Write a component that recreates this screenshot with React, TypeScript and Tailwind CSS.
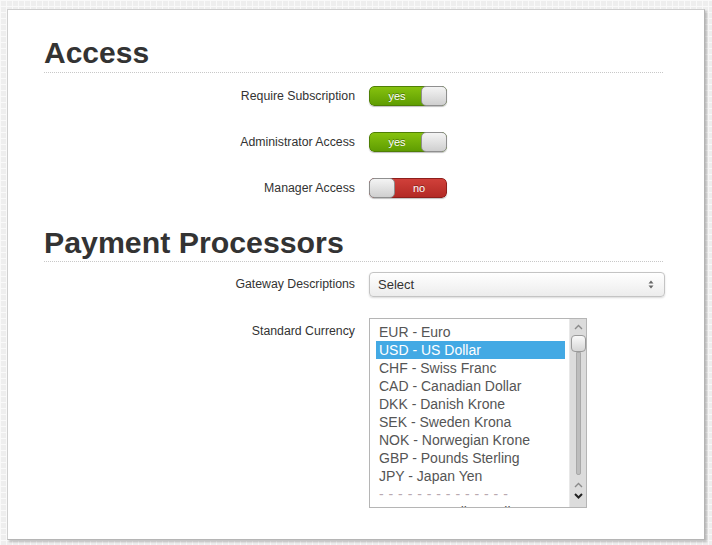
import React from "react";

const currencies = [
  "EUR - Euro",
  "USD - US Dollar",
  "CHF - Swiss Franc",
  "CAD - Canadian Dollar",
  "DKK - Danish Krone",
  "SEK - Sweden Krona",
  "NOK - Norwegian Krone",
  "GBP - Pounds Sterling",
  "JPY - Japan Yen",
  "- - - - - - - - - - - - - -",
  "AUD - Australian Dollar",
];

function Toggle({ on }: { on: boolean }) {
  return (
    <div className="relative h-[20px] w-[78px] rounded-[5px] overflow-hidden shadow-[0_1px_1px_rgba(0,0,0,0.25)]">
      {on ? (
        <>
          <div className="absolute inset-0 rounded-[5px] border border-[#4f7f05] bg-[linear-gradient(#86c20e,#5f9d02)] flex items-center">
            <span className="w-[54px] text-center text-[11px] text-white [text-shadow:0_-1px_0_rgba(0,0,0,0.35)]">yes</span>
          </div>
          <div className="absolute right-0 top-0 h-[20px] w-[26px] rounded-[5px] border border-[#8f8f8f] bg-[linear-gradient(#f4f4f4,#cfcfcf)]" />
        </>
      ) : (
        <>
          <div className="absolute inset-0 rounded-[5px] border border-[#8e1f1c] bg-[linear-gradient(#d0403a,#b32a25)] flex items-center justify-end">
            <span className="w-[54px] text-center text-[11px] text-white [text-shadow:0_-1px_0_rgba(0,0,0,0.35)]">no</span>
          </div>
          <div className="absolute left-0 top-0 h-[20px] w-[26px] rounded-[5px] border border-[#8f8f8f] bg-[linear-gradient(#f4f4f4,#cfcfcf)]" />
        </>
      )}
    </div>
  );
}

function Row({ label, children, top }: { label: string; children: React.ReactNode; top?: boolean }) {
  return (
    <div className={`flex ${top ? "items-start" : "items-center"}`}>
      <div className={`w-[311px] shrink-0 text-right text-[12.3px] text-[#333] ${top ? "pt-[4px]" : ""}`}>{label}</div>
      <div className="ml-[14px] shrink-0">{children}</div>
    </div>
  );
}

function Chevron({ dir, bold }: { dir: "up" | "down"; bold?: boolean }) {
  return (
    <svg width="9" height="6" viewBox="0 0 9 6">
      <path
        d={dir === "up" ? "M1 5 L4.5 1.5 L8 5" : "M1 1 L4.5 4.5 L8 1"}
        fill="none"
        stroke={bold ? "#222" : "#8a8a8a"}
        strokeWidth={bold ? 2 : 1.4}
      />
    </svg>
  );
}

export default function App() {
  return (
    <div
      className="w-[712px] h-[545px] overflow-hidden bg-[#eeeeee] bg-[linear-gradient(#f9f9f9_1px,transparent_1px),linear-gradient(90deg,#f9f9f9_1px,transparent_1px)] [background-size:6px_6px] pt-[9px] pl-[7px]"
      style={{ fontFamily: '"Liberation Sans", Arial, sans-serif' }}
    >
      <div className="w-[698px] h-[531px] bg-white border border-[#cfcfcf] border-r-[#b5b5b5] border-b-[#b5b5b5] shadow-[2px_2px_2px_rgba(0,0,0,0.22)] pl-[36px] pr-[41px] pt-[25px]">
        <h1 className="h-[38px] border-b border-dotted border-[#c8c8c8] text-[30px] leading-[36px] font-bold text-[#333]">
          Access
        </h1>
        <div className="mt-[13px] flex flex-col gap-[26px]">
          <Row label="Require Subscription">
            <Toggle on />
          </Row>
          <Row label="Administrator Access">
            <Toggle on />
          </Row>
          <Row label="Manager Access">
            <Toggle on={false} />
          </Row>
        </div>
        <h1 className="mt-[26px] h-[38px] border-b border-dotted border-[#c8c8c8] text-[30.3px] leading-[38px] font-bold text-[#333]">
          Payment Processors
        </h1>
        <div className="mt-[10px]">
          <Row label="Gateway Descriptions">
            <div className="flex h-[25px] w-[296px] items-center justify-between rounded-[4px] border border-[#c4c4c4] bg-[linear-gradient(#ffffff,#ececec)] pl-[8px] pr-[10px] text-[13px] text-[#333] shadow-[0_1px_2px_rgba(0,0,0,0.15)]">
              <span>Select</span>
              <svg width="6" height="9" viewBox="0 0 6 9">
                <path d="M0.5 3.5 L3 0.5 L5.5 3.5 Z" fill="#666" />
                <path d="M0.5 5.5 L3 8.5 L5.5 5.5 Z" fill="#666" />
              </svg>
            </div>
          </Row>
        </div>
        <div className="mt-[21px]">
          <Row label="Standard Currency" top>
            <div className="flex h-[190px] w-[218px] overflow-hidden border border-[#b5b5b5] bg-white">
              <div className="flex-1 overflow-hidden pl-[6px] pr-[4px] pt-[4px]">
                {currencies.map((c, i) => (
                  <div
                    key={c}
                    className={`h-[18px] pl-[3px] text-[14px] leading-[18px] whitespace-nowrap ${
                      i === 1 ? "bg-[#43a9e4] text-white" : i === 9 ? "text-[#b9a9b0] tracking-[0.5px]" : "text-[#555]"
                    }`}
                  >
                    {c}
                  </div>
                ))}
              </div>
              <div className="flex w-[17px] flex-col items-center bg-[#dcdcdc] border-l border-[#e8e8e8]">
                <div className="mt-[4px] h-[8px] flex items-center">
                  <Chevron dir="up" />
                </div>
                <div className="mt-[4px] h-[17px] w-[15px] rounded-[4px] border border-[#9a9a9a] bg-[linear-gradient(#fafafa,#d6d6d6)]" />
                <div className="h-[123px] w-[5px] rounded-b-[2px] border border-[#a9a9a9] bg-[#bdbdbd]" />
                <div className="mt-[6px] h-[8px] flex items-center">
                  <Chevron dir="up" />
                </div>
                <div className="mt-[3px] h-[8px] flex items-center">
                  <Chevron dir="down" bold />
                </div>
              </div>
            </div>
          </Row>
        </div>
      </div>
    </div>
  );
}
